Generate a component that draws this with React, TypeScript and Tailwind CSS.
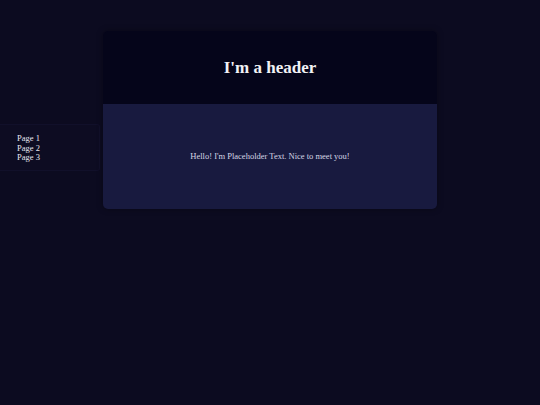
export default function App() {
  return (
    <div
      className="min-h-[405px] w-full bg-[#0c0b20] text-[#e8e8f0]"
      style={{ fontFamily: '"Liberation Serif", "Times New Roman", serif' }}
    >
      <div className="grid grid-cols-[103px_334px_1fr] items-start">
        {/* Sidebar */}
        <nav className="mt-[124px] mr-[3px] h-[47px] rounded-r-[3px] border border-l-0 border-[#11102a] bg-[#0d0c22] pl-[17px] pt-[9px] text-[8.5px] leading-[9.5px]">
          <div>Page 1</div>
          <div>Page 2</div>
          <div>Page 3</div>
        </nav>

        {/* Card */}
        <main className="mt-[31px] overflow-hidden rounded-[5px] shadow-[0_0_6px_rgba(0,0,0,0.35)]">
          <header className="flex h-[73px] items-center justify-center bg-[#05051a]">
            <h1 className="text-[17px] font-bold text-[#f2f2f5]">I'm a header</h1>
          </header>
          <section className="flex h-[105px] items-center justify-center bg-[#181a3f]">
            <p className="text-[8.5px] text-[#d6d6e4]">Hello! I'm Placeholder Text. Nice to meet you!</p>
          </section>
        </main>
      </div>
    </div>
  );
}
